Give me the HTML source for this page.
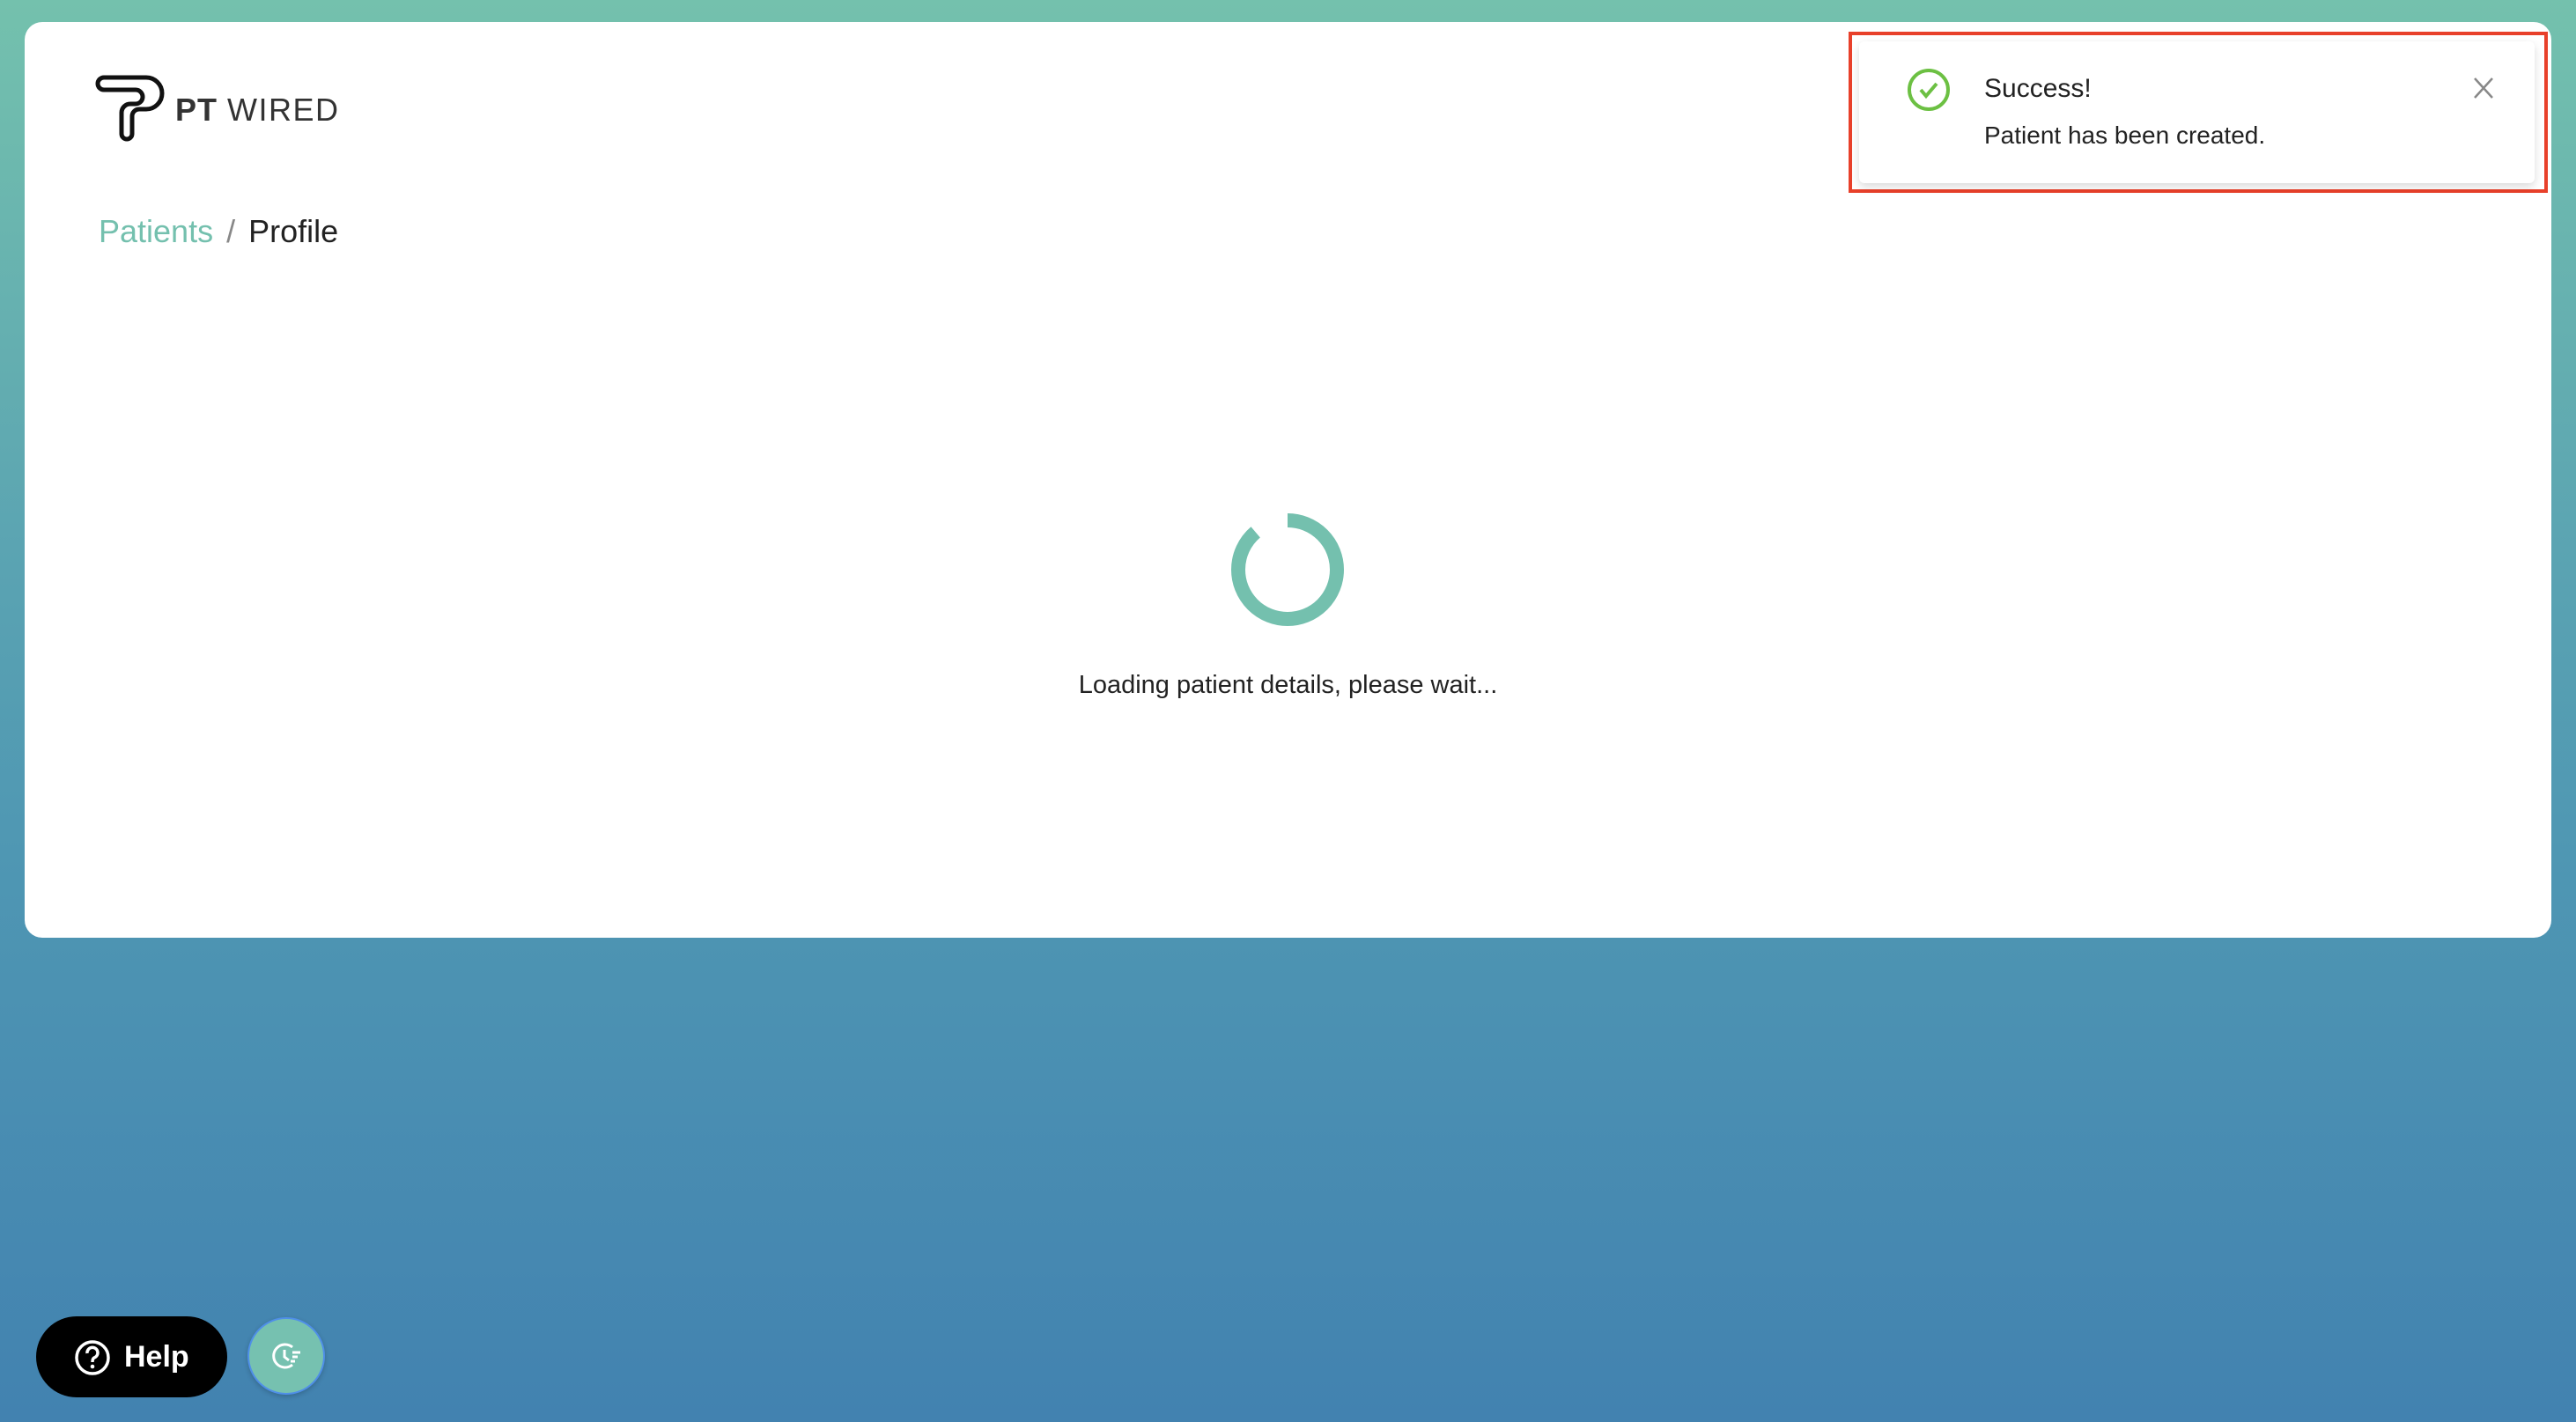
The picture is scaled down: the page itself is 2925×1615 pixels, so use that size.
<!DOCTYPE html>
<html><head><meta charset="utf-8"><style>
html,body{margin:0;padding:0;width:2925px;height:1615px;overflow:hidden}
body{background:linear-gradient(180deg,#74c1ad 0%,#5aa3b2 40%,#4f97b3 60%,#4282b0 100%);font-family:"Liberation Sans",sans-serif;position:relative}
.card{position:absolute;left:28px;top:25px;width:2869px;height:1040px;background:#fff;border-radius:20px}
.abs{position:absolute}
</style></head><body>
<div class="card"></div>
<svg class="abs" style="left:108px;top:84px" width="80" height="78" viewBox="0 0 80 78">
<path d="M10 4 H58 A18 18 0 0 1 58 40 H50 A8 8 0 0 0 42 48 V68 A6 6 0 0 1 30 68 V44 A10 10 0 0 1 40 34 H46 A8 8 0 0 0 46 18 H10 A7 7 0 0 1 10 4 Z" fill="none" stroke="#111" stroke-width="5" stroke-linejoin="round"/>
</svg>
<div class="abs" style="left:199px;top:104px;font-size:36px;color:#333;letter-spacing:1px;white-space:nowrap"><b style="font-weight:700">PT</b> <span style="letter-spacing:1.5px">WIRED</span></div>
<div class="abs" style="left:112px;top:242px;font-size:36px;white-space:nowrap"><span style="color:#74c0ae">Patients</span> <span style="color:#888;margin:0 5px">/</span> <span style="color:#222">Profile</span></div>
<svg class="abs" style="left:1390px;top:575px" width="144" height="144" viewBox="0 0 144 144">
<circle cx="72" cy="72" r="56" fill="none" stroke="#74c0ae" stroke-width="16" stroke-dasharray="312 40" transform="rotate(-90 72 72)"/>
</svg>
<div class="abs" style="left:0;width:2925px;top:762px;text-align:center;font-size:29px;color:#222">Loading patient details, please wait...</div>
<div class="abs" style="left:2099px;top:36px;width:786px;height:175px;border:4px solid #e8402a"></div>
<div class="abs" style="left:2111px;top:47px;width:767px;height:161px;background:#fff;border-radius:6px;box-shadow:0 4px 10px rgba(0,0,0,.15)"></div>
<svg class="abs" style="left:2164px;top:76px" width="52" height="52" viewBox="0 0 52 52"><circle cx="26" cy="26" r="22" fill="none" stroke="#6cc043" stroke-width="4"/><path d="M17 26 L23 33 L35 19" fill="none" stroke="#6cc043" stroke-width="4"/></svg>
<div class="abs" style="left:2253px;top:84px;font-size:30px;color:#222">Success!</div>
<div class="abs" style="left:2253px;top:138px;font-size:28px;color:#222">Patient has been created.</div>
<svg class="abs" style="left:2808px;top:87px" width="24" height="26" viewBox="0 0 24 26"><path d="M2 2 L22 24 M22 2 L2 24" stroke="#888" stroke-width="2.5"/></svg>
<div class="abs" style="left:41px;top:1495px;width:217px;height:92px;background:#000;border-radius:46px"></div>
<svg class="abs" style="left:84px;top:1521px" width="42" height="42" viewBox="0 0 42 42"><circle cx="21" cy="21" r="18" fill="none" stroke="#fff" stroke-width="3.5"/><path d="M15 16 A6 6 0 1 1 23 21 Q21 22 21 26" fill="none" stroke="#fff" stroke-width="3.5"/><circle cx="21" cy="31" r="2.3" fill="#fff"/></svg>
<div class="abs" style="left:141px;top:1522px;font-size:34px;font-weight:700;color:#fff">Help</div>
<div class="abs" style="left:281px;top:1496px;width:84px;height:84px;border-radius:50%;background:#76c1b0;border:2px solid #4f8fe8;box-shadow:0 2px 6px rgba(0,0,0,.2)"></div>
<svg class="abs" style="left:305px;top:1520px" width="40" height="40" viewBox="0 0 40 40"><path d="M27 10 A13 13 0 1 0 27 30" fill="none" stroke="#fff" stroke-width="3"/><path d="M18 13 V21 L23 25" fill="none" stroke="#fff" stroke-width="3"/><path d="M27 16 H36 M27 21 H33 M25 26 H30" stroke="#fff" stroke-width="3"/></svg>
</body></html>
